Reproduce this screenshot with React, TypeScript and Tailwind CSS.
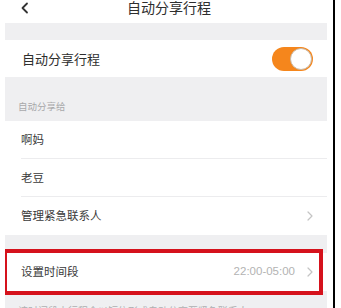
import React from 'react';

const Chevron = () => (
  <svg width="6" height="10" viewBox="0 0 6 10" className="shrink-0">
    <path d="M1 1l4 4-4 4" fill="none" stroke="#c4c4c4" strokeWidth="1.2" strokeLinecap="round" strokeLinejoin="round" />
  </svg>
);

const Row = ({ label, right, divider = true }: { label: string; right?: React.ReactNode; divider?: boolean }) => (
  <div className="relative flex h-[38px] items-center justify-between bg-white pl-[16px] pr-[14px]">
    <span className="text-[11.5px] leading-none text-[#3a3a3a]">{label}</span>
    {right}
    {divider && <div className="absolute bottom-0 left-[16px] right-0 h-px bg-[#ececee]" />}
  </div>
);

export default function App() {
  return (
    <div
      className="flex h-[308px] w-[341px] items-start overflow-hidden bg-white"
      style={{ fontFamily: '"Noto Sans CJK SC", "Noto Sans", sans-serif' }}
    >
      <div className="ml-[5px] h-[308px] w-[322px] shrink-0 overflow-hidden bg-[#efeff1]">
        <div className="relative flex h-[23px] items-start justify-center bg-white">
          <svg width="10" height="12" viewBox="0 0 10 12" className="absolute left-[15px] top-[2px]">
            <path d="M7 1.5L2.5 6 7 10.5" fill="none" stroke="#333" strokeWidth="1.8" strokeLinecap="round" strokeLinejoin="round" />
          </svg>
          <span className="ml-[6px] text-[14px] leading-[15px] text-[#2e2e2e]">自动分享行程</span>
        </div>
        <div className="h-[17px]" />
        <div className="flex h-[37px] items-center justify-between bg-white pl-[17px] pr-[14px]">
          <span className="text-[13px] leading-none text-[#2e2e2e]">自动分享行程</span>
          <div className="flex h-[24px] w-[41px] items-center justify-end rounded-full bg-[#f5861c] p-[1px]">
            <div className="h-[22px] w-[22px] rounded-full border border-[#c9b9a6] bg-white" />
          </div>
        </div>
        <div className="flex h-[44px] items-end pb-[10px] pl-[13px]">
          <span className="text-[9.5px] leading-none text-[#a8a8aa]">自动分享给</span>
        </div>
        <Row label="啊妈" />
        <Row label="老豆" />
        <Row label="管理紧急联系人" right={<Chevron />} divider={false} />
        <div className="h-[18px]" />
        <div className="relative">
          <Row
            label="设置时间段"
            divider={false}
            right={
              <div className="flex items-center gap-[12px]">
                <span className="text-[11.5px] leading-none text-[#b3b3b3]" style={{ fontFamily: '"Liberation Sans", sans-serif' }}>
                  22:00-05:00
                </span>
                <Chevron />
              </div>
            }
          />
          <div className="absolute -left-[2px] right-[4px] -top-[4px] -bottom-[4px] border-[4px] border-[#d5121c]" />
        </div>
        <div className="pl-[13px] pt-[5px]">
          <span className="whitespace-nowrap text-[10px] leading-none text-[#b0b0b2]">该时间段内行程会以短信形式自动分享至紧急联系人</span>
        </div>
      </div>
      <div className="w-[6px] shrink-0" />
      <div className="h-[308px] w-[1.5px] shrink-0 bg-black" />
    </div>
  );
}
